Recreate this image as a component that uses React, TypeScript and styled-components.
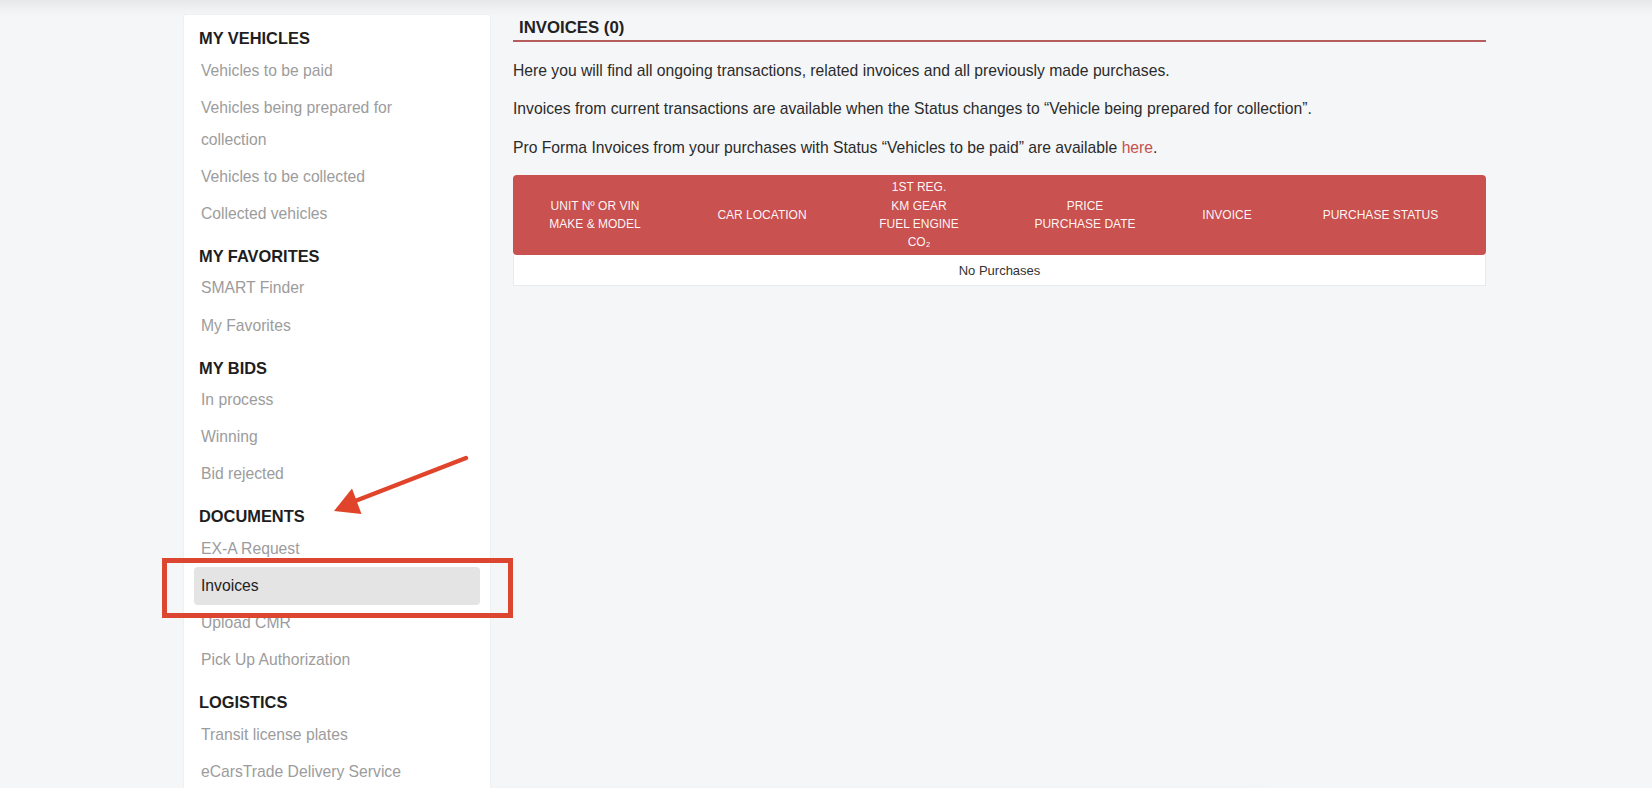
import React from "react";
import styled, { createGlobalStyle } from "styled-components";

const GlobalStyle = createGlobalStyle`
  html, body {
    margin: 0;
    padding: 0;
    overflow: hidden;
    height: 100%;
  }
  body {
    font-family: "Liberation Sans", Arial, Helvetica, sans-serif;
    background: #f5f6f8;
    color: #2b2b2b;
  }
`;

const Page = styled.div`
  position: relative;
  min-height: 788px;
  background: linear-gradient(to bottom, #e6e7e9 0px, #f1f2f4 10px, #f5f6f8 18px, #f5f6f8 100%);
  display: flex;
  align-items: flex-start;
  padding: 14px 0 0 183px;
  gap: 22px;
  box-sizing: border-box;
`;

const Sidebar = styled.nav`
  width: 308px;
  min-height: 800px;
  background: #ffffff;
  border: 1px solid #eef0f2;
  border-bottom: none;
  border-radius: 3px 3px 0 0;
  box-sizing: border-box;
  padding: 10px 0 0;
  display: flex;
  flex-direction: column;
`;

const Section = styled.div`
  display: flex;
  flex-direction: column;
  & + & {
    margin-top: 10.5px;
  }
`;

const SectionTitle = styled.div`
  font-size: 16.4px;
  font-weight: 700;
  line-height: 27px;
  color: #1e1e1e;
  padding-left: 15px;
  text-transform: uppercase;
`;

const NavItem = styled.a<{ $active?: boolean }>`
  display: block;
  margin: 0 10px 0 10px;
  padding: 2.55px 60px 2.55px 7px;
  font-size: 15.7px;
  line-height: 32px;
  color: ${(p) => (p.$active ? "#222222" : "#9c9c9c")};
  background: ${(p) => (p.$active ? "#e4e4e4" : "transparent")};
  border-radius: 4px;
  text-decoration: none;
  cursor: pointer;
`;

const Main = styled.main`
  width: 973px;
  padding-top: 1.5px;
  display: flex;
  flex-direction: column;
`;

const Title = styled.h1`
  margin: 0;
  font-size: 16.8px;
  font-weight: 700;
  line-height: 24px;
  color: #222222;
  padding-left: 6px;
  border-bottom: 2px solid #b65e5e;
`;

const Paragraph = styled.p`
  margin: 0 0 14.5px;
  font-size: 15.7px;
  line-height: 24px;
  color: #2b2b2b;
  &:first-of-type {
    margin-top: 17px;
  }
`;

const Link = styled.a`
  color: #c4504e;
  text-decoration: none;
`;

const Table = styled.div`
  margin-top: 1px;
  display: flex;
  flex-direction: column;
`;

const HeaderRow = styled.div`
  display: grid;
  grid-template-columns: 164px 170px 144px 188px 96px 1fr;
  height: 80px;
  background: #c95150;
  border-radius: 4px;
  color: #ffffff;
`;

const HeaderCell = styled.div`
  display: flex;
  align-items: center;
  justify-content: center;
  text-align: center;
  font-size: 12px;
  line-height: 18.3px;
  text-transform: uppercase;
  color: rgba(255, 255, 255, 0.96);
`;

const EmptyRow = styled.div`
  height: 31px;
  background: #ffffff;
  border: 1px solid #e9eaec;
  border-top: none;
  box-sizing: border-box;
  display: flex;
  align-items: center;
  justify-content: center;
  font-size: 13px;
  color: #333333;
`;

const Annotation = styled.svg`
  position: absolute;
  left: 0;
  top: 0;
  width: 1652px;
  height: 788px;
  pointer-events: none;
`;

const BottomShade = styled.div`
  position: absolute;
  left: 491px;
  bottom: 0;
  width: 810px;
  height: 30px;
  pointer-events: none;
  background: linear-gradient(to bottom, rgba(0, 0, 0, 0) 0%, rgba(0, 0, 0, 0.035) 60%, rgba(0, 0, 0, 0.065) 100%);
  -webkit-mask-image: linear-gradient(to right, #000 0%, #000 92%, transparent 100%);
  mask-image: linear-gradient(to right, #000 0%, #000 92%, transparent 100%);
`;

type NavSection = { title: string; items: string[] };

const sections: NavSection[] = [
  {
    title: "My Vehicles",
    items: [
      "Vehicles to be paid",
      "Vehicles being prepared for collection",
      "Vehicles to be collected",
      "Collected vehicles",
    ],
  },
  { title: "My Favorites", items: ["SMART Finder", "My Favorites"] },
  { title: "My Bids", items: ["In process", "Winning", "Bid rejected"] },
  {
    title: "Documents",
    items: ["EX-A Request", "Invoices", "Upload CMR", "Pick Up Authorization"],
  },
  {
    title: "Logistics",
    items: ["Transit license plates", "eCarsTrade Delivery Service"],
  },
];

const headers: React.ReactNode[] = [
  <>
    Unit Nº or VIN
    <br />
    Make &amp; Model
  </>,
  <>Car Location</>,
  <>
    1st Reg.
    <br />
    KM Gear
    <br />
    Fuel Engine
    <br />
    CO₂
  </>,
  <>
    Price
    <br />
    Purchase Date
  </>,
  <>Invoice</>,
  <>Purchase Status</>,
];

export default function App() {
  return (
    <>
      <GlobalStyle />
      <Page>
        <Sidebar>
          {sections.map((s) => (
            <Section key={s.title}>
              <SectionTitle>{s.title}</SectionTitle>
              {s.items.map((item) => (
                <NavItem key={item} $active={item === "Invoices"}>
                  {item}
                </NavItem>
              ))}
            </Section>
          ))}
        </Sidebar>
        <Main>
          <Title>INVOICES (0)</Title>
          <Paragraph>
            Here you will find all ongoing transactions, related invoices and all previously made purchases.
          </Paragraph>
          <Paragraph>
            Invoices from current transactions are available when the Status changes to “Vehicle being prepared for collection”.
          </Paragraph>
          <Paragraph>
            Pro Forma Invoices from your purchases with Status “Vehicles to be paid” are available <Link>here</Link>.
          </Paragraph>
          <Table>
            <HeaderRow>
              {headers.map((h, i) => (
                <HeaderCell key={i}>{h}</HeaderCell>
              ))}
            </HeaderRow>
            <EmptyRow>No Purchases</EmptyRow>
          </Table>
        </Main>
        <BottomShade />
        <Annotation viewBox="0 0 1652 788">
          <rect x="164.5" y="560.5" width="346" height="55" fill="none" stroke="#dc4530" strokeWidth="5" />
          <line x1="466" y1="458" x2="350" y2="503" stroke="#e0442b" strokeWidth="4.5" strokeLinecap="round" />
          <polygon points="334,511 352,488.5 361.5,514" fill="#e0442b" />
        </Annotation>
      </Page>
    </>
  );
}
